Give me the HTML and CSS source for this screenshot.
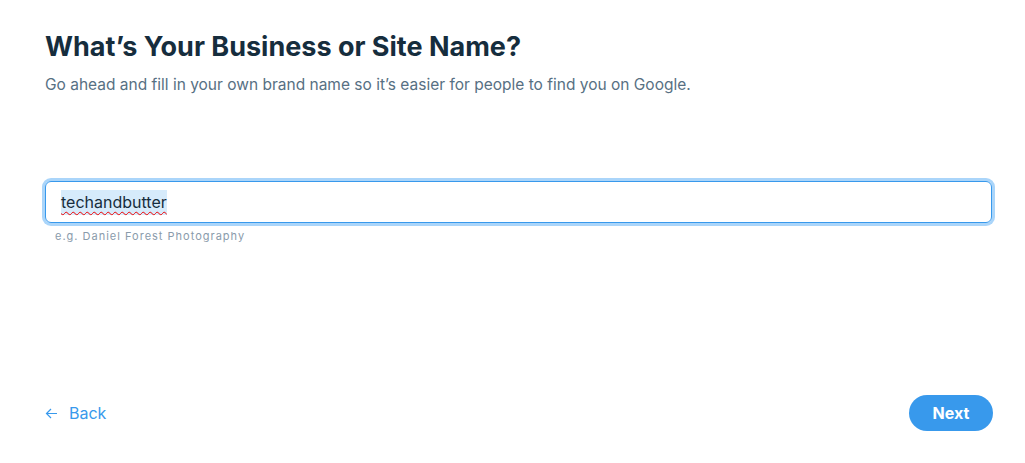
FILE: index.html
```html
<!DOCTYPE html>
<html>
<head>
<meta charset="utf-8">
<link rel="stylesheet" href="styles.css">
</head>
<body>
<div class="page">
  <header class="intro">
    <h1 class="title">What’s Your Business or Site Name?</h1>
    <p class="subtitle">Go ahead and fill in your own brand name so it’s easier for people to find you on Google.</p>
  </header>
  <div class="field">
    <div class="input"><span class="value">techandbutter</span></div>
    <div class="hint">e.g. Daniel Forest Photography</div>
  </div>
  <footer class="actions">
    <a class="back">
      <svg class="arrow" width="13" height="11" viewBox="0 0 13 11"><path d="M12 5.5H1.5M6 1L1.5 5.5L6 10" fill="none" stroke="#3899ec" stroke-width="1.2"/></svg>
      <span>Back</span>
    </a>
    <button class="next">Next</button>
  </footer>
</div>
</body>
</html>
```
FILE: styles.css
```css
html, body { margin: 0; padding: 0; background: #fff; }
body { font-family: "Inter", "Open Sans", sans-serif; }
.page {
  width: 1025px; height: 463px; box-sizing: border-box;
  padding: 29px 32px 0 45px;
  display: flex; flex-direction: column;
}
.title {
  margin: 0; font-size: 27px; font-weight: 700; color: #162d3d;
  line-height: 36px; letter-spacing: 0;
}
.subtitle {
  margin: 9px 0 0; font-size: 15.5px; color: #577083; line-height: 22px;
}
.field { margin-top: 85px; }
.input {
  height: 42px; box-sizing: border-box; border: 1px solid #3899ec;
  border-radius: 6px; box-shadow: 0 0 0 3px #aad5fa;
  display: flex; align-items: center; padding-left: 15px;
  width: 947px;
}
.value {
  font-size: 16px; color: #162d3d; background: #d6ebfb; padding: 2px 0 3px;
  text-decoration: underline wavy #e00; text-underline-offset: 3px; text-decoration-thickness: 1px;
}
.hint {
  margin: 6px 0 0 10px; font-size: 11px; letter-spacing: 1px; color: #8a9bab;
}
.actions {
  margin-top: auto; margin-bottom: 32px; display: flex; align-items: center; justify-content: space-between;
}
.back { display: flex; align-items: center; gap: 11px; color: #3899ec; font-size: 16px; }
.next {
  width: 84px; height: 36px; border: none; border-radius: 18px; background: #3899ec;
  color: #fff; font-family: inherit; font-size: 16px; font-weight: 700; margin-right: 0;
}
```
